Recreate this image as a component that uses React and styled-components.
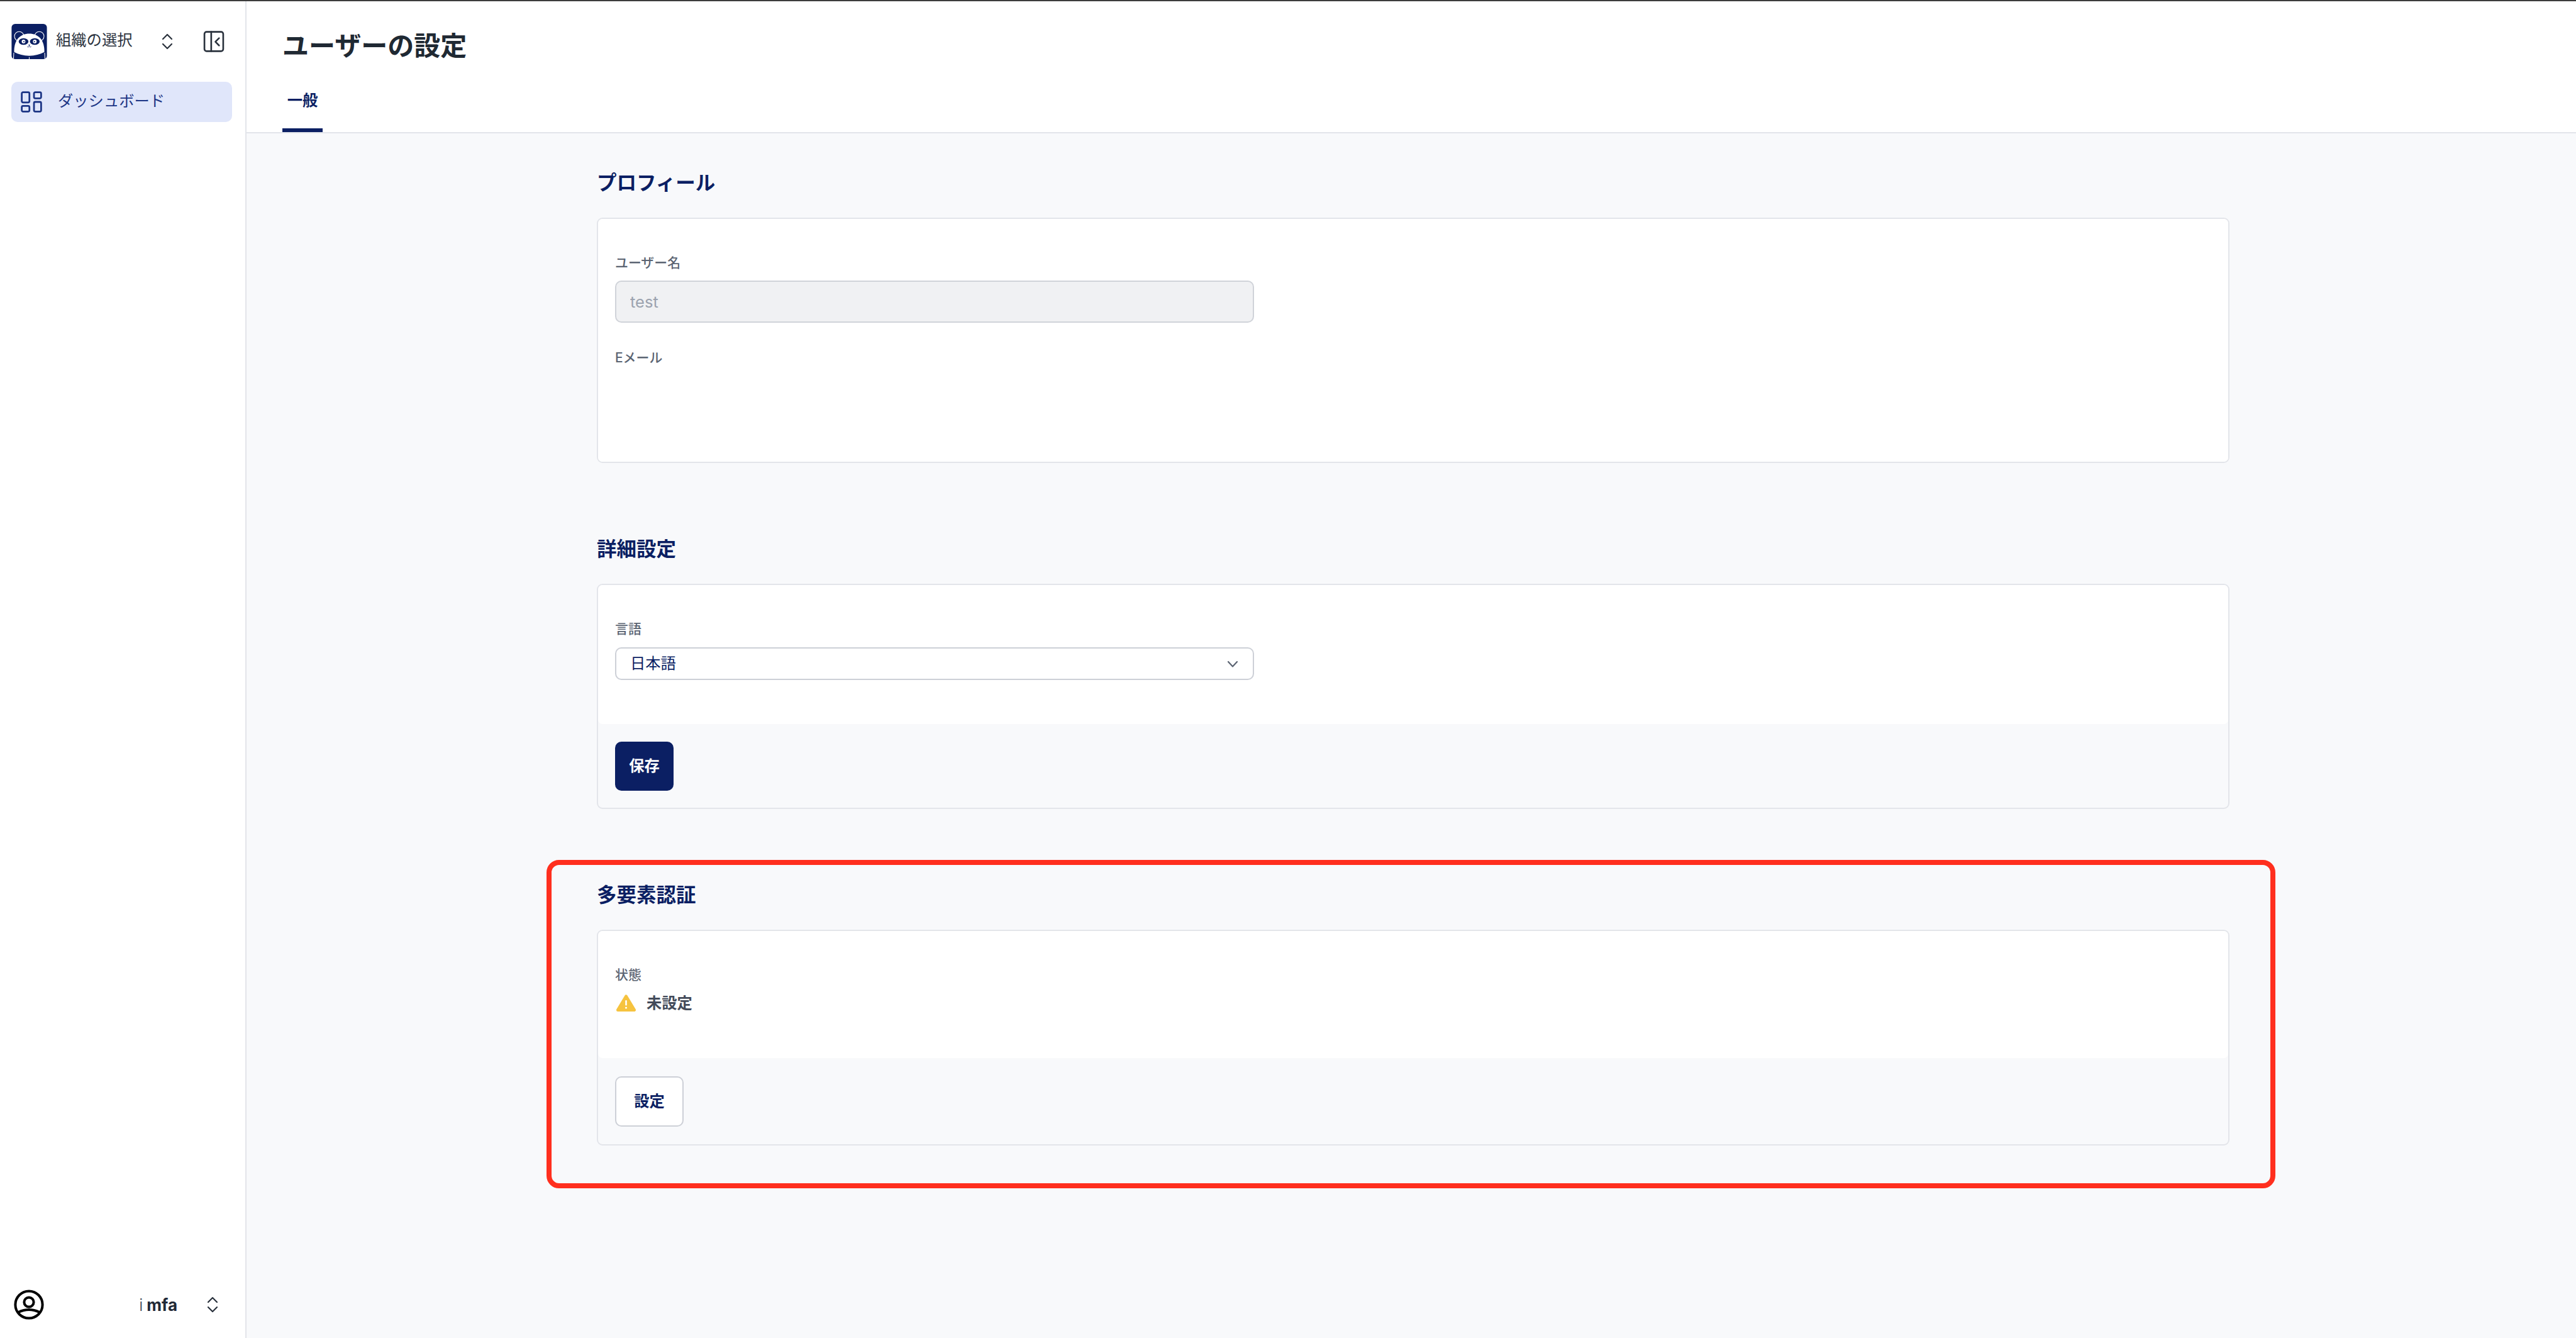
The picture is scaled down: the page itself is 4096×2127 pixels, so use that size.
import React from "react";
import styled, { createGlobalStyle } from "styled-components";

const Global = createGlobalStyle`
  html, body { margin: 0; padding: 0; background: #f8f9fb; }
  body { font-family: Inter, "Noto Sans CJK JP", sans-serif; }
  * { box-sizing: border-box; }
`;

const NAVY = "#0b1f63";

const Page = styled.div`
  width: 4096px; height: 2127px; overflow: hidden;
  display: flex; flex-direction: column;
  background: #f8f9fb;
`;
const TopLine = styled.div`height: 2px; background: #3c3c3c; flex: none;`;
const Shell = styled.div`flex: 1; display: flex; min-height: 0;`;

const Sidebar = styled.aside`
  width: 392px; flex: none; background: #fff;
  border-right: 2px solid #e3e5ea;
  display: flex; flex-direction: column;
`;
const OrgRow = styled.div`
  display: flex; align-items: center;
  padding: 35px 0 0 18px; height: 93px;
`;
const Logo = styled.svg`width: 57px; height: 56px; flex: none; display: block;`;
const OrgName = styled.span`
  margin-left: 14px; width: 168px; font-size: 24.3px; line-height: 34px; padding-bottom: 6px;
  color: #2c3440; white-space: nowrap;
`;
const ToggleIcon = styled.svg`width: 18px; height: 26px; flex: none; display: block;`;
const CollapseIcon = styled.svg`width: 34px; height: 34px; flex: none; margin-left: 48px; display: block;`;

const NavItem = styled.div`
  margin: 35px 21px 0 18px; height: 64px; border-radius: 10px;
  background: #e0e6fa; color: #1c3585;
  display: flex; align-items: center; padding-left: 15px;
  font-size: 24.3px;
`;
const NavIcon = styled.svg`width: 34px; height: 34px; flex: none; margin-right: 25px; display: block;`;
const NavText = styled.span`padding-bottom: 7px;`;

const UserRow = styled.div`
  margin-top: auto; height: 106px; display: flex; align-items: center;
  padding: 0 43px 0 22px;
`;
const UserIcon = styled.svg`width: 48px; height: 48px; flex: none; display: block;`;
const UserName = styled.span`
  margin-left: auto; margin-right: 47px; font-size: 26px; font-weight: 700; color: #212936;
  white-space: nowrap;
`;
const ThinI = styled.span`font-weight: 300; margin-right: 6px; color: #3a4350;`;

const Main = styled.main`flex: 1; min-width: 0; display: flex; flex-direction: column;`;
const Header = styled.header`
  height: 210px; flex: none; background: #fff; border-bottom: 2px solid #e3e5ea;
  padding: 42px 0 0 57px;
  display: flex; flex-direction: column;
`;
const Title = styled.h1`
  margin: 0; font-size: 42px; line-height: 58px; font-weight: 700; color: #1f2933;
`;
const Tab = styled.div`
  margin-top: 37px; align-self: flex-start; height: 73px; width: 64px;
  border-bottom: 6px solid ${NAVY};
  font-size: 24.3px; line-height: 40px; font-weight: 700; color: ${NAVY};
  text-align: center;
`;

const Content = styled.div`padding: 57px 0 0 557px; width: 3153px;`;
const Section = styled.section`position: relative; margin-bottom: 115px;`;
const Heading = styled.h2`
  margin: 0 0 33px; font-size: 31.5px; line-height: 44px; font-weight: 700; color: ${NAVY};
`;
const Card = styled.div`
  border: 2px solid #e3e5ea; border-radius: 9px; background: #f8f9fb;
`;
const CardBody = styled.div`
  background: #fff; border-radius: 7px;
  padding: 56px 27px ${p => p.$bottom}px;
`;
const CardFooter = styled.div`padding: ${p => p.$top}px 27px ${p => p.$bottom}px;`;
const Label = styled.div`
  font-size: 20.9px; line-height: 28px; color: #5b6472; font-weight: 500;
`;
const FieldLabel = styled(Label)`margin-top: ${p => p.$top || 0}px;`;
const TextInput = styled.input`
  display: block; width: 1016px; height: 67px; margin-top: 14px;
  border: 2px solid #d0d3d9; border-radius: 10px; background: #f0f1f3;
  padding: 0 22px; font: inherit; font-size: 25.5px; color: #9ca3af;
  -webkit-text-fill-color: #9ca3af; opacity: 1;
`;
const SelectBox = styled.div`
  width: 1016px; height: 52px; margin-top: 15px;
  border: 2px solid #cdd0d7; border-radius: 10px; background: #fff;
  padding: 0 22px;
  display: flex; align-items: center; justify-content: space-between;
  font-size: 24.3px; color: ${NAVY};
`;
const SelectText = styled.span`padding-bottom: 6px;`;
const SelectChevron = styled.svg`width: 20px; height: 12px; display: block; margin-top: 2px;`;
const PrimaryButton = styled.button`
  display: block; width: 93px; height: 78px; border: 0; border-radius: 10px;
  background: ${NAVY}; color: #fff; font: inherit; font-size: 24.3px; font-weight: 700;
  padding: 0 0 5px;
`;
const SecondaryButton = styled.button`
  display: block; width: 109px; height: 80px; border: 2px solid #cdd0d7; border-radius: 10px;
  background: #fff; color: ${NAVY}; font: inherit; font-size: 24.3px; font-weight: 700;
  padding: 0 0 5px;
`;
const StatusRow = styled.div`
  display: flex; align-items: center; margin-top: 14px; height: 34px;
  font-size: 24.3px; font-weight: 700; color: #434b5a;
`;
const StatusText = styled.span`padding-bottom: 6px;`;
const WarnIcon = styled.svg`width: 31px; height: 28px; margin: 0 17px 0 2px; display: block; flex: none;`;
const Highlight = styled.div`
  position: absolute; top: -34px; left: -80px; right: -73px; bottom: -68px;
  border: 8px solid #ff2f1e; border-radius: 20px; pointer-events: none;
`;

const PandaLogo = () => (
  <Logo viewBox="0 0 212 210">
    <defs>
      <clipPath id="logoClip"><rect width="212" height="210" rx="22" /></clipPath>
    </defs>
    <g clipPath="url(#logoClip)">
      <rect width="212" height="210" fill="#0b1f63" />
      <circle cx="46" cy="74" r="28" fill="#0b1f63" stroke="#fff" strokeWidth="4" />
      <circle cx="166" cy="74" r="28" fill="#0b1f63" stroke="#fff" strokeWidth="4" />
      <path d="M16 168 C14 95 52 58 106 58 C160 58 198 95 196 168 C170 182 140 190 106 190 C72 190 42 182 16 168 Z" fill="#fff" />
      <path d="M14 172 L12 210 M198 172 L200 210 M106 198 L106 210" stroke="#fff" strokeWidth="4" fill="none" />
      <ellipse cx="72" cy="105" rx="29" ry="20" fill="#0b1f63" />
      <ellipse cx="139" cy="105" rx="29" ry="20" fill="#0b1f63" />
      <circle cx="72" cy="105" r="11" fill="#fff" />
      <circle cx="139" cy="105" r="11" fill="#fff" />
      <circle cx="74" cy="106" r="4" fill="#0b1f63" />
      <circle cx="137" cy="106" r="4" fill="#0b1f63" />
      <path d="M100 124 H112 L106 132 Z" fill="#0b1f63" />
      <path d="M94 135 Q100 142 106 134 Q112 142 118 135" stroke="#0b1f63" strokeWidth="3" fill="none" />
    </g>
  </Logo>
);

const UpDown = () => (
  <ToggleIcon viewBox="0 0 18 26" fill="none" stroke="#2a323d" strokeWidth="2.2" strokeLinecap="round" strokeLinejoin="round">
    <path d="M2 9 L9 2 L16 9" />
    <path d="M2 17 L9 24 L16 17" />
  </ToggleIcon>
);

export default function App() {
  return (
    <Page>
      <Global />
      <TopLine />
      <Shell>
        <Sidebar>
          <OrgRow>
            <PandaLogo />
            <OrgName>組織の選択</OrgName>
            <UpDown />
            <CollapseIcon viewBox="0 0 40 41" fill="none" stroke="#2a323d" strokeWidth="3.2" strokeLinecap="round" strokeLinejoin="round">
              <rect x="2" y="2" width="36" height="37" rx="4" />
              <path d="M15 2 V39" />
              <path d="M30 14 L23 21 L30 28" />
            </CollapseIcon>
          </OrgRow>
          <NavItem>
            <NavIcon viewBox="0 0 42 42" fill="none" stroke="#1c3585" strokeWidth="3.4" strokeLinejoin="round">
              <rect x="2" y="2" width="15" height="20" rx="2.5" />
              <rect x="26" y="2" width="14" height="12" rx="2.5" />
              <rect x="2" y="29" width="15" height="11" rx="2.5" />
              <rect x="26" y="21" width="14" height="19" rx="2.5" />
            </NavIcon>
            <NavText>ダッシュボード</NavText>
          </NavItem>
          <UserRow>
            <UserIcon viewBox="0 0 60 60" fill="none" stroke="#000" strokeWidth="5">
              <circle cx="30" cy="30" r="27" />
              <circle cx="30" cy="25" r="9.5" />
              <path d="M9 45 Q30 35 51 45" />
            </UserIcon>
            <UserName><ThinI>i</ThinI>mfa</UserName>
            <UpDown />
          </UserRow>
        </Sidebar>
        <Main>
          <Header>
            <Title>ユーザーの設定</Title>
            <Tab>一般</Tab>
          </Header>
          <Content>
            <Section>
              <Heading>プロフィール</Heading>
              <Card>
                <CardBody $bottom={151}>
                  <Label>ユーザー名</Label>
                  <TextInput value="test" disabled readOnly />
                  <FieldLabel $top={42}>Eメール</FieldLabel>
                </CardBody>
              </Card>
            </Section>
            <Section>
              <Heading>詳細設定</Heading>
              <Card>
                <CardBody $bottom={70}>
                  <Label>言語</Label>
                  <SelectBox>
                    <SelectText>日本語</SelectText>
                    <SelectChevron viewBox="0 0 20 12" fill="none" stroke="#5b6472" strokeWidth="2.2" strokeLinecap="round" strokeLinejoin="round">
                      <path d="M3 2 L10 9.5 L17 2" />
                    </SelectChevron>
                  </SelectBox>
                </CardBody>
                <CardFooter $top={28} $bottom={27}>
                  <PrimaryButton>保存</PrimaryButton>
                </CardFooter>
              </Card>
            </Section>
            <Section>
              <Heading>多要素認証</Heading>
              <Card>
                <CardBody $bottom={70}>
                  <Label>状態</Label>
                  <StatusRow>
                    <WarnIcon viewBox="0 0 31 28">
                      <path d="M15.5 3 L28.5 24.5 H2.5 Z" fill="#f6c33f" stroke="#f6c33f" strokeWidth="5" strokeLinejoin="round" />
                      <rect x="14.2" y="9" width="2.6" height="8.5" rx="1.2" fill="#fff" />
                      <circle cx="15.5" cy="21" r="1.6" fill="#fff" />
                    </WarnIcon>
                    <StatusText>未設定</StatusText>
                  </StatusRow>
                </CardBody>
                <CardFooter $top={29} $bottom={28}>
                  <SecondaryButton>設定</SecondaryButton>
                </CardFooter>
              </Card>
              <Highlight />
            </Section>
          </Content>
        </Main>
      </Shell>
    </Page>
  );
}
